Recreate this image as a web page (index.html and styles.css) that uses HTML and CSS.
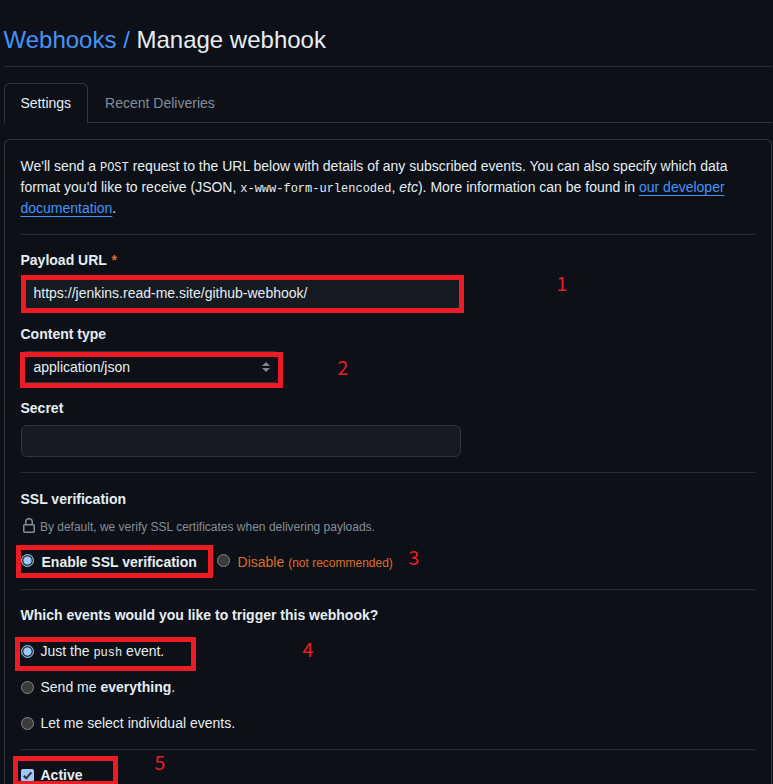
FILE: index.html
```html
<!DOCTYPE html>
<html lang="en">
<head>
<meta charset="utf-8">
<title>Manage webhook</title>
<link rel="stylesheet" href="styles.css">
</head>
<body>
<header class="subhead">
  <h1><a href="#">Webhooks /</a> Manage webhook</h1>
</header>
<nav class="tabs">
  <a class="tab selected" href="#">Settings</a>
  <a class="tab" href="#">Recent Deliveries</a>
</nav>
<main class="panel">
  <p class="intro">We'll send a <code>POST</code> request to the URL below with details of any subscribed events. You can also specify which data format you'd like to receive (JSON, <code>x-www-form-urlencoded</code>, <em>etc</em>). More information can be found in <a href="#">our developer documentation</a>.</p>
  <hr>
  <section class="field">
    <div class="label">Payload URL <span class="required">*</span></div>
    <div class="control text">https://jenkins.read-me.site/github-webhook/</div>
    <span class="mark mark-url"></span><span class="num num-1">1</span>
  </section>
  <section class="field">
    <div class="label">Content type</div>
    <div class="control select">application/json
      <svg class="caret" width="8" height="10" viewBox="0 0 8 10"><path d="M4 0 8 4H0ZM0 6h8L4 10Z"/></svg>
    </div>
    <span class="mark mark-type"></span><span class="num num-2">2</span>
  </section>
  <section class="field">
    <div class="label">Secret</div>
    <div class="control text"></div>
  </section>
  <hr>
  <section class="field ssl">
    <div class="label">SSL verification</div>
    <p class="note"><svg class="lock" width="16" height="16" viewBox="0 0 16 16"><path d="M4 4a4 4 0 0 1 8 0v2h.25c.966 0 1.75.784 1.75 1.75v5.5A1.75 1.75 0 0 1 12.25 15h-8.5A1.75 1.75 0 0 1 2 13.25v-5.5C2 6.784 2.784 6 3.75 6H4Zm8.25 3.5h-8.5a.25.25 0 0 0-.25.25v5.5c0 .138.112.25.25.25h8.5a.25.25 0 0 0 .25-.25v-5.5a.25.25 0 0 0-.25-.25ZM10.5 6V4a2.5 2.5 0 1 0-5 0v2Z"/></svg>By default, we verify SSL certificates when delivering payloads.</p>
    <div class="ssl-options">
      <label class="enable"><input type="radio" name="ssl" checked><strong>Enable SSL verification</strong></label>
      <label class="disable"><input type="radio" name="ssl"><span>Disable <small>(not recommended)</small></span></label>
      <span class="mark mark-ssl"></span><span class="num num-3">3</span>
    </div>
  </section>
  <hr>
  <section class="field">
    <div class="label">Which events would you like to trigger this webhook?</div>
    <div class="events">
      <label><input type="radio" name="events" checked><span>Just the <code>push</code> event.</span></label>
      <label><input type="radio" name="events"><span>Send me <strong>everything</strong>.</span></label>
      <label><input type="radio" name="events"><span>Let me select individual events.</span></label>
      <span class="mark mark-push"></span><span class="num num-4">4</span>
    </div>
  </section>
  <hr>
  <section class="field active">
    <label><span class="checkbox"><svg width="13" height="13" viewBox="0 0 13 13"><path d="m2.8 6.7 2.5 2.6 5-6"/></svg></span><strong>Active</strong></label>
    <span class="mark mark-active"></span><span class="num num-5">5</span>
  </section>
</main>
</body>
</html>
```
FILE: styles.css
```css
* { box-sizing: border-box; }
html { overflow: hidden; }
body {
  height: 784px;
  margin: 0;
  padding: 22px 1px 0 3.5px;
  overflow: hidden;
  background: #0d1117;
  color: #e6edf3;
  font: 14px/21px "Liberation Sans", Arial, sans-serif;
}
a { color: #4493f8; text-decoration: none; }
code { font: 12px "Liberation Mono", monospace; }
p { margin: 0; }
hr { height: 1px; margin: 15px 0; border: 0; background: #262c34; }

.subhead { height: 45px; border-bottom: 1px solid #262c34; }
h1 { margin: 0; font-size: 24px; font-weight: 400; line-height: 36px; }

.tabs {
  display: flex;
  height: 40px;
  margin: 16px 0;
  border-bottom: 1px solid #30363d;
}
.tab { height: 40px; padding: 9px 16px; border: 1px solid transparent; border-bottom: 0; color: #848d97; }
.tab.selected {
  border-color: #30363d;
  border-radius: 6px 6px 0 0;
  background: #0d1117;
  color: #e6edf3;
}

.panel {
  height: 645px;
  padding: 16px 16px 0;
  overflow: hidden;
  border: 1px solid #30363d;
  border-bottom: 0;
  border-radius: 6px 6px 0 0;
}
.intro a { text-decoration: underline; text-underline-offset: 3px; }
.field { position: relative; }
.field + .field { margin-top: 15px; }
.label { font-weight: 700; }
.required { margin-left: 1px; color: #db6d28; }
.control {
  height: 32px;
  margin-top: 6px;
  padding: 5px 12px;
  border: 1px solid #30363d;
  border-radius: 6px;
}
.text { width: 440px; background: #161b22; }
.select {
  display: flex;
  align-items: center;
  justify-content: space-between;
  width: 258px;
  padding-right: 8px;
}
.caret { fill: #7d8590; }

.ssl { margin-top: 16px; }
.note { display: flex; margin-top: 7px; color: #848d97; font-size: 12px; }
.lock { margin: 1px 3.4px 0 0; fill: #848d97; }

label { display: flex; }
input {
  flex: none;
  width: 13px;
  height: 13px;
  margin: 4px 7px 0 0;
  appearance: none;
  border: 1px solid #858585;
  border-radius: 50%;
  background: #3b3b3b;
}
input:checked {
  border-color: #99c8ff;
  background: radial-gradient(circle, #99c8ff 3.6px, #3b3b3b 4.4px);
}
.ssl-options { position: relative; display: flex; margin-top: 14px; }
.ssl-options input { margin: 2px 8px 0 0; }
.ssl-options label + label { margin-left: 19.7px; }
.disable { color: #db6d28; }
small { font-size: 12px; }
.events { position: relative; display: grid; gap: 15px; margin-top: 15px; }
.checkbox {
  width: 13px;
  height: 13px;
  margin: 4px 7px 0 0;
  border-radius: 2px;
  background: #99c8ff;
}
.checkbox svg { display: block; fill: none; stroke: #303030; stroke-width: 2; }

/* Callouts over the form */
.mark { position: absolute; border: 5px solid #ed1c24; }
.mark-url { left: 0; top: 25px; width: 443px; height: 38px; }
.mark-type { left: -1px; top: 28px; width: 263px; height: 36px; }
.mark-ssl { left: -5px; top: -7px; width: 197px; height: 33px; }
.mark-push { left: -6px; top: -4px; width: 181px; height: 34px; }
.mark-active { left: -8px; top: -9px; width: 105px; height: 30px; }
.num {
  position: absolute;
  color: #ed1c24;
  font: 19.5px/20px "Noto Sans CJK SC", sans-serif;
}
.num-1 { left: 536px; top: 23px; }
.num-2 { left: 317px; top: 33px; }
.num-3 { left: 388px; top: -5px; }
.num-4 { left: 282px; top: -2px; }
.num-5 { left: 134px; top: -13px; }
```
